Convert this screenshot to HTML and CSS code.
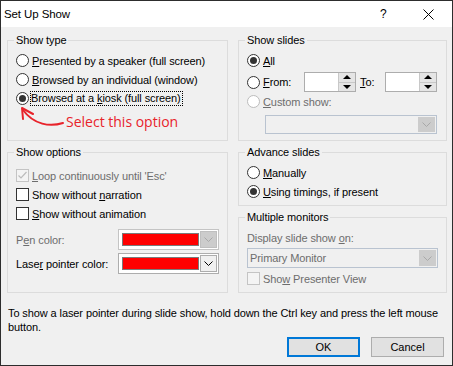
FILE: index.html
```html
<!DOCTYPE html>
<html lang="en">
<head>
<meta charset="utf-8">
<title>Set Up Show</title>
<link rel="stylesheet" href="styles.css">
</head>
<body>
<div class="window">
  <div class="titlebar">
    <span class="title">Set Up Show</span>
    <span class="help">?</span>
    <span class="close"><svg width="11" height="11" viewBox="0 0 11 11"><path d="M0.5 0.5 L10.5 10.5 M10.5 0.5 L0.5 10.5" stroke="#000" stroke-width="1" fill="none"/></svg></span>
  </div>
  <div class="content">
    <div class="groups">
      <fieldset class="group g-type">
        <legend>Show type</legend>
        <label class="opt"><span class="radio"></span><span><u>P</u>resented by a speaker (full screen)</span></label>
        <label class="opt"><span class="radio"></span><span><u>B</u>rowsed by an individual (window)</span></label>
        <label class="opt"><span class="radio on"></span><span class="focus">Browsed at a <u>k</u>iosk (full screen)</span></label>
        <div class="note-callout">
          <svg class="arrow" width="52" height="26" viewBox="0 0 52 26">
            <path d="M49 18 C36 22 20 20 9 5" stroke="#e8232b" stroke-width="2" fill="none" stroke-linecap="round"/>
            <path d="M19 9 L8 3 L9 14" stroke="#e8232b" stroke-width="2" fill="none" stroke-linecap="round" stroke-linejoin="round"/>
          </svg>
          <span class="callout-text">Select this option</span>
        </div>
      </fieldset>
      <fieldset class="group g-slides">
        <legend>Show slides</legend>
        <label class="opt"><span class="radio on"></span><span><u>A</u>ll</span></label>
        <div class="opt from-row">
          <span class="radio"></span><span class="from-label"><u>F</u>rom:</span>
          <span class="spin"><span class="spin-field"></span><span class="spin-btns"><span class="spin-up"></span><span class="spin-down"></span></span></span>
          <span class="to-label"><u>T</u>o:</span>
          <span class="spin"><span class="spin-field"></span><span class="spin-btns"><span class="spin-up"></span><span class="spin-down"></span></span></span>
        </div>
        <label class="opt disabled"><span class="radio off"></span><span><u>C</u>ustom show:</span></label>
        <div class="combo combo-custom disabled-combo"><span class="combo-text"></span><span class="combo-btn"><svg width="9" height="5" viewBox="0 0 9 5"><polyline points="0.5,0.5 4.5,4.5 8.5,0.5" stroke="#a8a8a8" fill="none"/></svg></span></div>
      </fieldset>
      <fieldset class="group g-options">
        <legend>Show options</legend>
        <label class="opt disabled"><span class="check off"><svg width="11" height="11" viewBox="0 0 11 11"><polyline points="1.5,5.5 4,8 9.5,2" stroke="#bcbcbc" stroke-width="1.2" fill="none"/></svg></span><span><u>L</u>oop continuously until 'Esc'</span></label>
        <label class="opt"><span class="check"></span><span>Show without <u>n</u>arration</span></label>
        <label class="opt"><span class="check"></span><span><u>S</u>how without animation</span></label>
        <div class="color-row pen-row disabled">
          <span class="color-label">P<u>e</u>n color:</span>
          <span class="color-combo off"><span class="swatch"></span><span class="cbtn"><svg width="9" height="5" viewBox="0 0 9 5"><polyline points="0.5,0.5 4.5,4.5 8.5,0.5" stroke="#a8a8a8" fill="none"/></svg></span></span>
        </div>
        <div class="color-row laser-row">
          <span class="color-label">Lase<u>r</u> pointer color:</span>
          <span class="color-combo"><span class="swatch"></span><span class="cbtn"><svg width="9" height="5" viewBox="0 0 9 5"><polyline points="0.5,0.5 4.5,4.5 8.5,0.5" stroke="#000" fill="none"/></svg></span></span>
        </div>
      </fieldset>
      <div class="stack">
        <fieldset class="group g-adv">
          <legend>Advance slides</legend>
          <label class="opt"><span class="radio"></span><span><u>M</u>anually</span></label>
          <label class="opt"><span class="radio on"></span><span><u>U</u>sing timings, if present</span></label>
        </fieldset>
        <fieldset class="group g-mon">
          <legend>Multiple monitors</legend>
          <div class="mon-label disabled">Display slide show <u>o</u>n:</div>
          <div class="combo combo-mon disabled-combo"><span class="combo-text">Primary Monitor</span><span class="combo-btn"><svg width="9" height="5" viewBox="0 0 9 5"><polyline points="0.5,0.5 4.5,4.5 8.5,0.5" stroke="#a8a8a8" fill="none"/></svg></span></div>
          <label class="opt disabled presenter"><span class="check off"></span><span>Sho<u>w</u> Presenter View</span></label>
        </fieldset>
      </div>
    </div>
    <p class="note">To show a laser pointer during slide show, hold down the Ctrl key and press the left mouse button.</p>
    <div class="buttons">
      <button class="btn btn-default" type="button">OK</button>
      <button class="btn" type="button">Cancel</button>
    </div>
  </div>
</div>
</body>
</html>
```
FILE: styles.css
```css
html, body {
  margin: 0;
  padding: 0;
  background: #f0f0f0;
}
body {
  font-family: "Liberation Sans", Arial, sans-serif;
  font-size: 11px;
  letter-spacing: -0.1px;
  color: #000;
}
.window {
  width: 453px;
  height: 366px;
  box-sizing: border-box;
  border: 1px solid #2d2d2d;
  background: #f0f0f0;
  display: flex;
  flex-direction: column;
}
.titlebar {
  height: 26px;
  flex: none;
  background: #fff;
  display: flex;
  align-items: center;
  padding-left: 3px;
  font-size: 11.5px;
}
.title {
  flex: 1;
}
.help {
  width: 10px;
  margin-right: 33px;
  font-size: 12px;
}
.close {
  width: 11px;
  height: 11px;
  margin-right: 18px;
  display: flex;
}
.content {
  padding: 6px 7px 0 6px;
}
.groups {
  display: grid;
  grid-template-columns: 221px 209px;
  grid-template-rows: 108px 148px;
  column-gap: 10px;
  row-gap: 4px;
}
.group {
  margin: 0;
  padding: 0 8px;
  border: 1px solid #dcdcdc;
  box-sizing: border-box;
  min-width: 0;
}
.group legend {
  padding: 0 2px;
  margin-left: -2px;
  line-height: 15px;
}
.g-type, .g-slides { padding-top: 3px; }
.g-options { padding-top: 6px; }
.g-adv { height: 61px; padding-top: 3px; }
.g-mon { height: 83px; padding-top: 5px; }
.stack {
  display: flex;
  flex-direction: column;
  gap: 4px;
}
.opt {
  display: flex;
  align-items: center;
  gap: 3px;
  height: 19px;
  white-space: nowrap;
}
.disabled { color: #6d6d6d; }
.radio {
  width: 13px;
  height: 13px;
  box-sizing: border-box;
  border: 1px solid #333;
  border-radius: 50%;
  background: #fff;
  flex: none;
  display: inline-flex;
  align-items: center;
  justify-content: center;
}
.radio.on::after {
  content: "";
  width: 7px;
  height: 7px;
  border-radius: 50%;
  background: #333;
}
.radio.off { border-color: #bcbcbc; }
.check {
  width: 13px;
  height: 13px;
  box-sizing: border-box;
  border: 1px solid #333;
  background: #fff;
  flex: none;
  display: inline-flex;
  align-items: center;
  justify-content: center;
}
.check.off {
  border-color: #c4c4c4;
  background: #f4f4f4;
}
.focus {
  outline: 1px dotted #000;
  outline-offset: 0;
  padding: 0 1px 1px 0;
  margin-left: -1px;
}
.note-callout {
  display: flex;
  align-items: flex-start;
  margin: -3px 0 0 -2px;
  height: 27px;
}
.arrow { flex: none; }
.callout-text {
  color: #e8232b;
  font-family: "Open Sans", "Noto Sans", sans-serif;
  font-size: 14px;
  letter-spacing: 0;
  line-height: 20px;
  margin-top: 7px;
  margin-left: 0;
}
.from-row {
  height: 20px;
  margin-top: 2px;
  gap: 0;
}
.from-row .radio { margin-right: 3px; }
.from-label { width: 41px; }
.to-label { width: 25px; margin-left: 4px; }
.spin {
  width: 52px;
  height: 20px;
  box-sizing: border-box;
  border: 1px solid #adadad;
  background: #fff;
  display: flex;
}
.spin-field { flex: 1; }
.spin-btns {
  width: 16px;
  display: flex;
  flex-direction: column;
  border-left: 1px solid #c8c8c8;
}
.spin-up, .spin-down {
  flex: 1;
  background: #e5e5e5;
  display: flex;
  align-items: center;
  justify-content: center;
}
.spin-up { border-bottom: 1px solid #c8c8c8; }
.spin-up::after {
  content: "";
  border-left: 4px solid transparent;
  border-right: 4px solid transparent;
  border-bottom: 4px solid #000;
}
.spin-down::after {
  content: "";
  border-left: 4px solid transparent;
  border-right: 4px solid transparent;
  border-top: 4px solid #000;
}
.combo {
  height: 19px;
  box-sizing: border-box;
  display: flex;
  align-items: stretch;
}
.disabled-combo {
  border: 1px solid #b9c3d0;
  background: #f0f0f0;
  color: #6d6d6d;
}
.combo-text {
  flex: 1;
  padding-left: 2px;
  display: flex;
  align-items: center;
}
.combo-btn {
  width: 17px;
  margin: 1px;
  background: #cccccc;
  display: flex;
  align-items: center;
  justify-content: center;
}
.combo-custom {
  margin: 4px 0 0 18px;
  width: 172px;
}
.color-row {
  display: flex;
  align-items: center;
  white-space: nowrap;
}
.color-label { width: 102px; }
.pen-row { margin-top: 6px; }
.laser-row { margin-top: 3px; }
.color-combo {
  width: 101px;
  height: 21px;
  box-sizing: border-box;
  border: 1px solid #adadad;
  background: #fff;
  display: flex;
  align-items: center;
  padding: 0 1px 0 3px;
}
.color-combo.off { border-color: #c4c4c4; }
.swatch {
  width: 77px;
  height: 13px;
  box-sizing: border-box;
  border: 1px solid #7a7a7a;
  background: #ff0000;
}
.cbtn {
  margin-left: auto;
  width: 17px;
  height: 17px;
  box-sizing: border-box;
  border: 1px solid #adadad;
  background: #f0f0f0;
  display: flex;
  align-items: center;
  justify-content: center;
}
.color-combo.off .cbtn {
  background: #cccccc;
  border-color: #bfbfbf;
}
.mon-label {
  line-height: 15px;
  margin-top: 1px;
}
.combo-mon {
  margin-top: 2px;
  height: 20px;
}
.presenter { margin-top: 1px; }
.note {
  margin: 13px 0 0 0;
  line-height: 14px;
  padding-left: 1px;
}
.buttons {
  display: flex;
  justify-content: flex-end;
  gap: 11px;
  margin-top: 3px;
  padding-right: 1px;
}
.btn {
  width: 73px;
  height: 20px;
  box-sizing: border-box;
  border: 1px solid #adadad;
  background: #e1e1e1;
  font: inherit;
  color: #000;
  padding: 0;
}
.btn-default {
  border: 2px solid #0078d7;
}
```
